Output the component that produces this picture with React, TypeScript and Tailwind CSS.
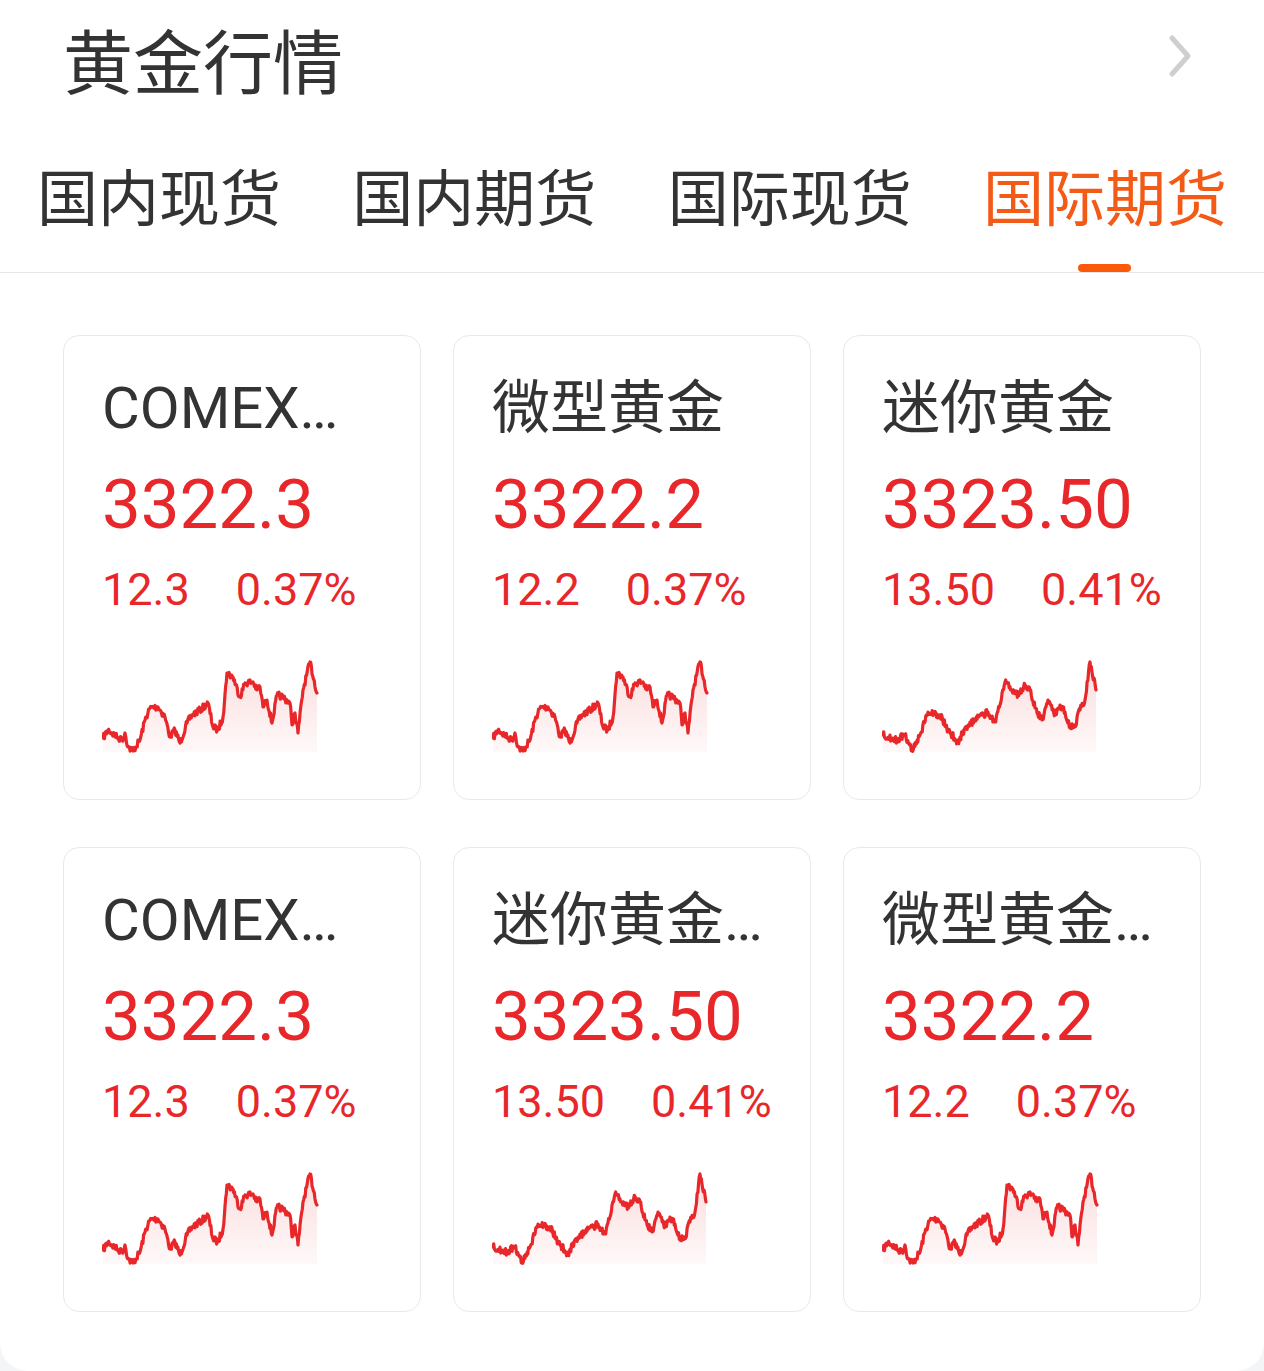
import { useMemo } from "react";

type Pt = [number, number];

// hand-traced key points of the two sparkline shapes (svg coords, 218 x 105)
const SHAPE_A: Pt[] = [
  [1, 88], [6, 80], [15, 87], [20, 90], [23, 83], [26, 97], [31, 101], [38, 90], [43, 70],
  [48, 58], [56, 57], [63, 67], [68, 87], [73, 80], [78, 93], [85, 73], [90, 65], [98, 60],
  [106, 53], [111, 77], [116, 80], [121, 67], [125, 23], [131, 27], [138, 47], [143, 33],
  [151, 32], [155, 40], [158, 37], [161, 57], [165, 50], [170, 73], [175, 45], [181, 47],
  [188, 53], [190, 75], [193, 63], [196, 83], [201, 40], [208, 12], [215, 43],
];

const SHAPE_B: Pt[] = [
  [1, 85], [15, 90], [23, 85], [30, 100], [38, 85], [46, 62], [58, 65], [66, 80], [76, 92],
  [83, 78], [93, 70], [106, 62], [113, 72], [118, 55], [123, 32], [130, 40], [136, 45],
  [143, 35], [148, 40], [153, 58], [160, 70], [166, 50], [173, 65], [178, 55], [183, 62],
  [188, 78], [193, 75], [198, 60], [203, 50], [208, 12], [210, 22], [214, 40],
];

type Quote = {
  name: string;
  price: string;
  change: string;
  pct: string;
  shape: "a" | "b";
};

const QUOTES: Quote[] = [
  { name: "COMEX…", price: "3322.3", change: "12.3", pct: "0.37%", shape: "a" },
  { name: "微型黄金", price: "3322.2", change: "12.2", pct: "0.37%", shape: "a" },
  { name: "迷你黄金", price: "3323.50", change: "13.50", pct: "0.41%", shape: "b" },
  { name: "COMEX…", price: "3322.3", change: "12.3", pct: "0.37%", shape: "a" },
  { name: "迷你黄金…", price: "3323.50", change: "13.50", pct: "0.41%", shape: "b" },
  { name: "微型黄金…", price: "3322.2", change: "12.2", pct: "0.37%", shape: "a" },
];

const TABS = ["国内现货", "国内期货", "国际现货", "国际期货"];

function noisy(keys: Pt[], seed: number): Pt[] {
  let s = seed;
  const rnd = () => {
    s = (s * 16807) % 2147483647;
    return s / 2147483647;
  };
  const out: Pt[] = [];
  for (let i = 0; i < keys.length - 1; i++) {
    const [x0, y0] = keys[i];
    const [x1, y1] = keys[i + 1];
    const steps = Math.max(2, Math.round((x1 - x0) / 0.7));
    for (let j = 0; j < steps; j++) {
      const t = j / steps;
      const jit = j === 0 ? 0 : (rnd() - 0.5) * 7;
      out.push([x0 + (x1 - x0) * t, y0 + (y1 - y0) * t + jit]);
    }
  }
  out.push(keys[keys.length - 1]);
  return out;
}

function Sparkline({ shape }: { shape: "a" | "b" }) {
  const pts = useMemo(() => noisy(shape === "a" ? SHAPE_A : SHAPE_B, shape === "a" ? 7 : 13), [shape]);
  const line = pts.map(([x, y], i) => `${i ? "L" : "M"}${x.toFixed(1)},${y.toFixed(1)}`).join(" ");
  const first = pts[0][0];
  const last = pts[pts.length - 1][0];
  const area = `${line} L${last},102 L${first},102 Z`;
  const gid = `spark-fill-${shape}`;
  return (
    <svg width="218" height="105" viewBox="0 0 218 105" className="block">
      <defs>
        <linearGradient id={gid} x1="0" y1="0" x2="0" y2="1">
          <stop offset="0%" stopColor="#e8272b" stopOpacity="0.16" />
          <stop offset="100%" stopColor="#e8272b" stopOpacity="0.03" />
        </linearGradient>
      </defs>
      <path d={area} fill={`url(#${gid})`} />
      <path d={line} fill="none" stroke="#e8272b" strokeWidth="3.2" strokeLinejoin="round" strokeLinecap="round" />
    </svg>
  );
}

function QuoteCard({ q }: { q: Quote }) {
  return (
    <div className="h-[465px] rounded-[16px] border border-[#e9e9eb] bg-white pl-[38px] pt-[37px] font-[Roboto,'Noto_Sans_CJK_SC',sans-serif]">
      <div className="h-[70px] whitespace-nowrap text-[58px] leading-[70px] text-[#333333]">{q.name}</div>
      <div className="mt-[22px] h-[80px] text-[69px] font-normal leading-[80px] text-[#e8272b]">{q.price}</div>
      <div className="mt-[19px] flex h-[52px] gap-[46px] text-[45px] leading-[52px] text-[#e8272b]">
        <span>{q.change}</span>
        <span>{q.pct}</span>
      </div>
      <div className="mt-[34px]">
        <Sparkline shape={q.shape} />
      </div>
    </div>
  );
}

export default function App() {
  return (
    <div className="min-h-[1371px] bg-[#f4f5f7]">
      <div className="h-[1371px] overflow-hidden rounded-b-[28px] bg-white">
        <div className="flex items-center justify-between pl-[63px] pr-[72px] pt-[24px]">
          <h1 className="h-[70px] font-['Noto_Sans_CJK_SC',sans-serif] text-[70px] font-normal leading-[70px] text-[#333333]">
            黄金行情
          </h1>
          <svg width="24" height="44" viewBox="0 0 24 44" className="-mt-[6px]">
            <path d="M4 4 L20 22 L4 40" fill="none" stroke="#cfcfcf" strokeWidth="5" strokeLinecap="round" strokeLinejoin="round" />
          </svg>
        </div>

        <div className="mt-[71px] flex justify-between border-b border-[#e6e6e6] px-[37px] font-['Noto_Sans_CJK_SC',sans-serif]">
          {TABS.map((t, i) => {
            const active = i === TABS.length - 1;
            return (
              <div key={t} className="flex flex-col items-center">
                <span className={`h-[60px] whitespace-nowrap text-[61px] leading-[60px] ${active ? "text-[#f25a16]" : "text-[#333333]"}`}>
                  {t}
                </span>
                <span className={`mt-[39px] h-[8px] w-[53px] rounded-full ${active ? "bg-[#fb5a0a]" : "bg-transparent"}`} />
              </div>
            );
          })}
        </div>

        <div className="mt-[62px] grid grid-cols-3 gap-x-[32px] gap-y-[47px] px-[63px]">
          {QUOTES.map((q, i) => (
            <QuoteCard key={i} q={q} />
          ))}
        </div>
      </div>
    </div>
  );
}
